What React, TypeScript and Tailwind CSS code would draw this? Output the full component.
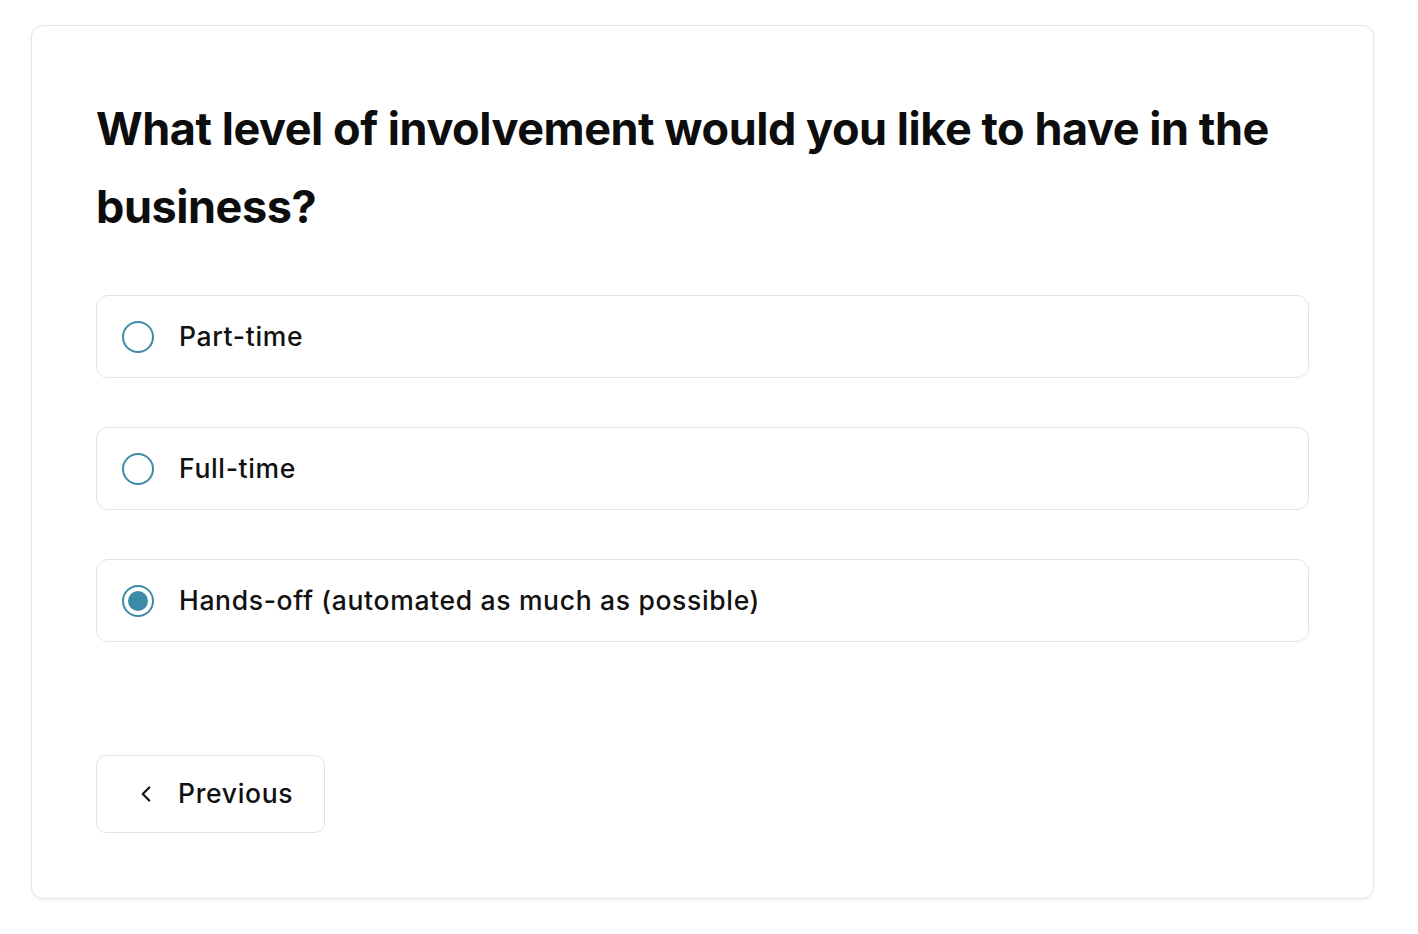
import React, { useState } from "react";

const options = [
  "Part-time",
  "Full-time",
  "Hands-off (automated as much as possible)",
];

export default function App() {
  const [selected, setSelected] = useState(2);
  return (
    <div className="min-h-[934px] bg-white pl-[31px] pt-[25px]" style={{ fontFamily: "Inter, 'Noto Sans', sans-serif" }}>
      <div className="w-[1343px] rounded-[12px] border border-[#e5e5e8] bg-white px-16 pt-16 pb-[65px] shadow-[0_1px_3px_rgba(0,0,0,0.06)]">
        <h1 className="text-[45px] font-bold leading-[78px] tracking-[-0.01em] text-[#0d0d0d]">
          What level of involvement would you like to have in the business?
        </h1>
        <div className="mt-[49px] flex flex-col gap-[49px]">
          {options.map((o, i) => (
            <button
              key={o}
              onClick={() => setSelected(i)}
              className="flex h-[83px] w-full items-center rounded-[12px] border border-[#e3e3e6] bg-white pl-[25px] text-left"
            >
              <span className="flex h-[32px] w-[32px] items-center justify-center rounded-full border-2 border-[#3d8aa6]">
                {selected === i && <span className="h-[20px] w-[20px] rounded-full bg-[#3d8aa6]" />}
              </span>
              <span className="ml-[25px] text-[26.5px] font-medium tracking-[0.025em] text-[#111111]">{o}</span>
            </button>
          ))}
        </div>
        <button className="mt-[113px] flex h-[78px] w-[229px] items-center rounded-[10px] border border-[#e3e3e6] bg-white pl-[36px]">
          <svg width="26" height="26" viewBox="0 0 24 24" fill="none" stroke="#111" strokeWidth="2" strokeLinecap="round" strokeLinejoin="round">
            <path d="M15 18l-6-6 6-6" />
          </svg>
          <span className="ml-[19px] text-[26.5px] font-medium tracking-[0.025em] text-[#111111]">Previous</span>
        </button>
      </div>
    </div>
  );
}
